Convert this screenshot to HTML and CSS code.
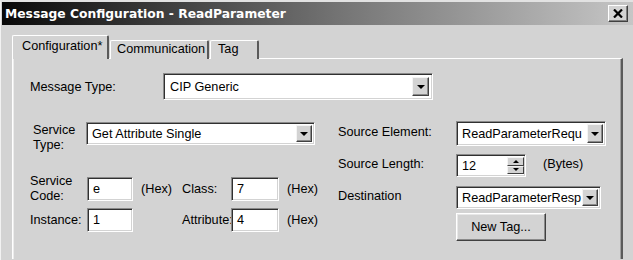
FILE: index.html
```html
<!DOCTYPE html>
<html lang="en">
<head>
    <meta charset="UTF-8">
    <title>Message Configuration - ReadParameter</title>
    <link rel="stylesheet" href="styles.css">
</head>
<body>
    <div class="window">
        <div class="titlebar">
            <span class="title">Message Configuration - ReadParameter</span>
            <span class="close">
                <svg width="10" height="9" viewBox="0 0 10 9"><path d="M1 0.5 L9 8.5 M9 0.5 L1 8.5" stroke="#000" stroke-width="2.2" fill="none"/></svg>
            </span>
        </div>

        <div class="tabs">
            <div class="tab active">Configuration*</div>
            <div class="tab tab-comm">Communication</div>
            <div class="tab tab-tag">Tag</div>
        </div>

        <div class="panel">
            <div class="msg-row">
                <label class="lbl msg-lbl">Message Type:</label>
                <div class="field combo combo-msg">
                    <span class="combo-text">CIP Generic</span>
                    <span class="drop"><i class="arrow-down"></i></span>
                </div>
            </div>

            <div class="columns">
                <div class="left-col">
                    <div class="service-row">
                        <label class="lbl service-lbl">Service<br>Type:</label>
                        <div class="field combo combo-service">
                            <span class="combo-text">Get Attribute Single</span>
                            <span class="drop"><i class="arrow-down"></i></span>
                        </div>
                    </div>

                    <div class="code-grid">
                        <label class="lbl">Service<br>Code:</label>
                        <div class="field text-box box-left">e</div>
                        <span class="lbl hex">(Hex)</span>
                        <label class="lbl">Class:</label>
                        <div class="field text-box box-right">7</div>
                        <span class="lbl hex">(Hex)</span>

                        <label class="lbl">Instance:</label>
                        <div class="field text-box box-left">1</div>
                        <span></span>
                        <label class="lbl">Attribute:</label>
                        <div class="field text-box box-right">4</div>
                        <span class="lbl hex">(Hex)</span>
                    </div>
                </div>

                <div class="right-col">
                    <div class="form-row row-element">
                        <label class="lbl right-lbl">Source Element:</label>
                        <div class="field combo combo-element">
                            <span class="combo-text">ReadParameterRequ</span>
                            <span class="drop"><i class="arrow-down"></i></span>
                        </div>
                    </div>
                    <div class="form-row row-length">
                        <label class="lbl right-lbl">Source Length:</label>
                        <div class="field spin">
                            <span class="combo-text">12</span>
                            <span class="spin-btns">
                                <span class="spin-btn"><i class="arrow-up"></i></span>
                                <span class="spin-btn"><i class="arrow-down small"></i></span>
                            </span>
                        </div>
                        <span class="lbl bytes">(Bytes)</span>
                    </div>
                    <div class="form-row row-dest">
                        <label class="lbl right-lbl">Destination</label>
                        <div class="field combo combo-dest">
                            <span class="combo-text">ReadParameterResp</span>
                            <span class="drop"><i class="arrow-down"></i></span>
                        </div>
                    </div>
                    <div class="form-row row-button">
                        <button class="new-tag">New Tag...</button>
                    </div>
                </div>
            </div>
        </div>
    </div>
</body>
</html>
```

FILE: styles.css
```css
html, body {
    margin: 0;
    padding: 0;
    overflow: hidden;
}
body {
    background: #d3d3d3;
    font-family: "Liberation Sans", Arial, sans-serif;
    font-size: 12.7px;
    color: #000;
}
.window {
    height: 258px;
    overflow: hidden;
    border-top: 2px solid #e2e2e2;
    border-left: 1px solid #f2f2f2;
    padding-left: 1px;
    background: #d3d3d3;
}

/* title bar */
.titlebar {
    height: 23px;
    display: flex;
    align-items: center;
    justify-content: space-between;
    padding-left: 3px;
    padding-right: 5px;
    background: linear-gradient(to right, #080808 0%, #3c3c3c 25%, #777 55%, #c6c6c6 100%);
}
.title {
    font-family: "DejaVu Sans", Verdana, sans-serif;
    font-weight: bold;
    font-size: 12.3px;
    color: #fff;
}
.close {
    width: 18px;
    height: 15px;
    display: flex;
    align-items: center;
    justify-content: center;
    background: #d3d3d3;
    border: 1px solid;
    border-color: #fff #404040 #404040 #fff;
    box-shadow: inset -1px -1px 0 #808080;
}

/* tabs */
.tabs {
    display: flex;
    align-items: flex-end;
    margin-top: 11px;
    padding-left: 10px;
    height: 23px;
    margin-bottom: -1px;
}
.tab {
    height: 18px;
    line-height: 17px;
    border-top: 1px solid #fff;
    border-left: 1px solid #fff;
    border-right: 2px solid #5a5a5a;
    border-top-left-radius: 2px;
    border-top-right-radius: 2px;
    box-sizing: border-box;
    padding-left: 6px;
    white-space: nowrap;
    background: #d3d3d3;
}
.tab.active {
    position: relative;
    z-index: 1;
    width: 97px;
    height: 24px;
    line-height: 20px;
    padding-left: 9px;
}
.tab-comm {
    width: 99px;
    height: 19px;
    margin-left: 1px;
}
.tab-tag {
    width: 49px;
    height: 19px;
    margin-left: 1px;
    padding-left: 7px;
}

/* panel */
.panel {
    margin-left: 10px;
    width: 611px;
    height: 201px;
    box-sizing: border-box;
    border-top: 1px solid #fff;
    border-left: 1px solid #fff;
    border-right: 2px solid #5a5a5a;
    box-shadow: inset 1px 0 0 #ececec, inset -1px 0 0 #a0a0a0;
    padding-top: 14px;
    padding-left: 17px;
}
.lbl {
    white-space: nowrap;
    line-height: 15px;
}

/* sunken fields */
.field {
    box-sizing: border-box;
    background: #fff;
    border: 1px solid;
    border-color: #8a8a8a #fff #fff #8a8a8a;
    box-shadow: inset 1px 1px 0 #303030, inset -1px -1px 0 #d3d3d3;
    display: flex;
    align-items: center;
}
.combo-text {
    flex: 1;
    padding-left: 5px;
    white-space: nowrap;
    overflow: hidden;
}
.drop {
    width: 16px;
    align-self: stretch;
    margin: 2px 2px 2px 0;
    box-sizing: border-box;
    background: #d3d3d3;
    border: 1px solid;
    border-color: #f4f4f4 #404040 #404040 #f4f4f4;
    box-shadow: inset -1px -1px 0 #8a8a8a;
    display: flex;
    align-items: center;
    justify-content: center;
}
.arrow-down {
    width: 0;
    height: 0;
    border-left: 4px solid transparent;
    border-right: 4px solid transparent;
    border-top: 4px solid #000;
    margin-top: 1px;
}
.arrow-down.small {
    border-left-width: 3px;
    border-right-width: 3px;
    border-top-width: 3px;
    margin-top: 0;
}
.arrow-up {
    width: 0;
    height: 0;
    border-left: 3px solid transparent;
    border-right: 3px solid transparent;
    border-bottom: 3px solid #000;
}

/* message type */
.msg-row {
    display: flex;
    align-items: center;
}
.msg-lbl {
    width: 133px;
    padding-top: 2px;
}
.combo-msg {
    width: 270px;
    height: 27px;
}
.combo-msg .combo-text {
    padding-left: 6px;
}
.combo-msg .drop {
    margin: 3px 3px 3px 0;
    width: 17px;
}

/* two columns */
.columns {
    display: flex;
    margin-top: 21px;
}
.left-col {
    width: 308px;
    padding-top: 1px;
}
.service-row {
    display: flex;
    align-items: flex-start;
    height: 31px;
}
.service-lbl {
    width: 53px;
    padding-left: 3px;
    margin-top: 1px;
}
.combo-service {
    width: 229px;
    height: 23px;
}

.code-grid {
    display: grid;
    grid-template-columns: 57px 46px 49px 49px 48px auto;
    grid-template-rows: 30px 24px;
    row-gap: 4px;
    align-items: center;
    margin-top: 21px;
}
.text-box {
    height: 24px;
    padding-left: 5px;
}
.hex {
    padding-left: 8px;
}

.right-col {
    flex: 1;
}
.form-row {
    display: flex;
    align-items: center;
}
.right-lbl {
    width: 118px;
    padding-bottom: 2px;
}
.combo-element {
    width: 150px;
    height: 25px;
}
.row-length {
    margin-top: 8px;
}
.spin {
    width: 70px;
    height: 23px;
}
.spin-btns {
    display: flex;
    flex-direction: column;
    width: 17px;
    align-self: stretch;
    margin: 2px 1px 2px 0;
}
.spin-btn {
    flex: 1;
    box-sizing: border-box;
    background: #d3d3d3;
    border: 1px solid;
    border-color: #f4f4f4 #404040 #404040 #f4f4f4;
    display: flex;
    align-items: center;
    justify-content: center;
}
.bytes {
    margin-left: 17px;
    padding-bottom: 2px;
}
.row-dest {
    margin-top: 9px;
}
.combo-dest {
    width: 145px;
    height: 23px;
}
.row-button {
    margin-top: 4px;
    padding-left: 118px;
}
.new-tag {
    width: 90px;
    height: 28px;
    font-family: "Liberation Sans", Arial, sans-serif;
    font-size: 12.7px;
    color: #000;
    background: #d3d3d3;
    border: 1px solid;
    border-color: #fff #404040 #404040 #fff;
    box-shadow: inset -1px -1px 0 #8a8a8a, inset 1px 1px 0 #e8e8e8;
    padding: 0;
}
```
